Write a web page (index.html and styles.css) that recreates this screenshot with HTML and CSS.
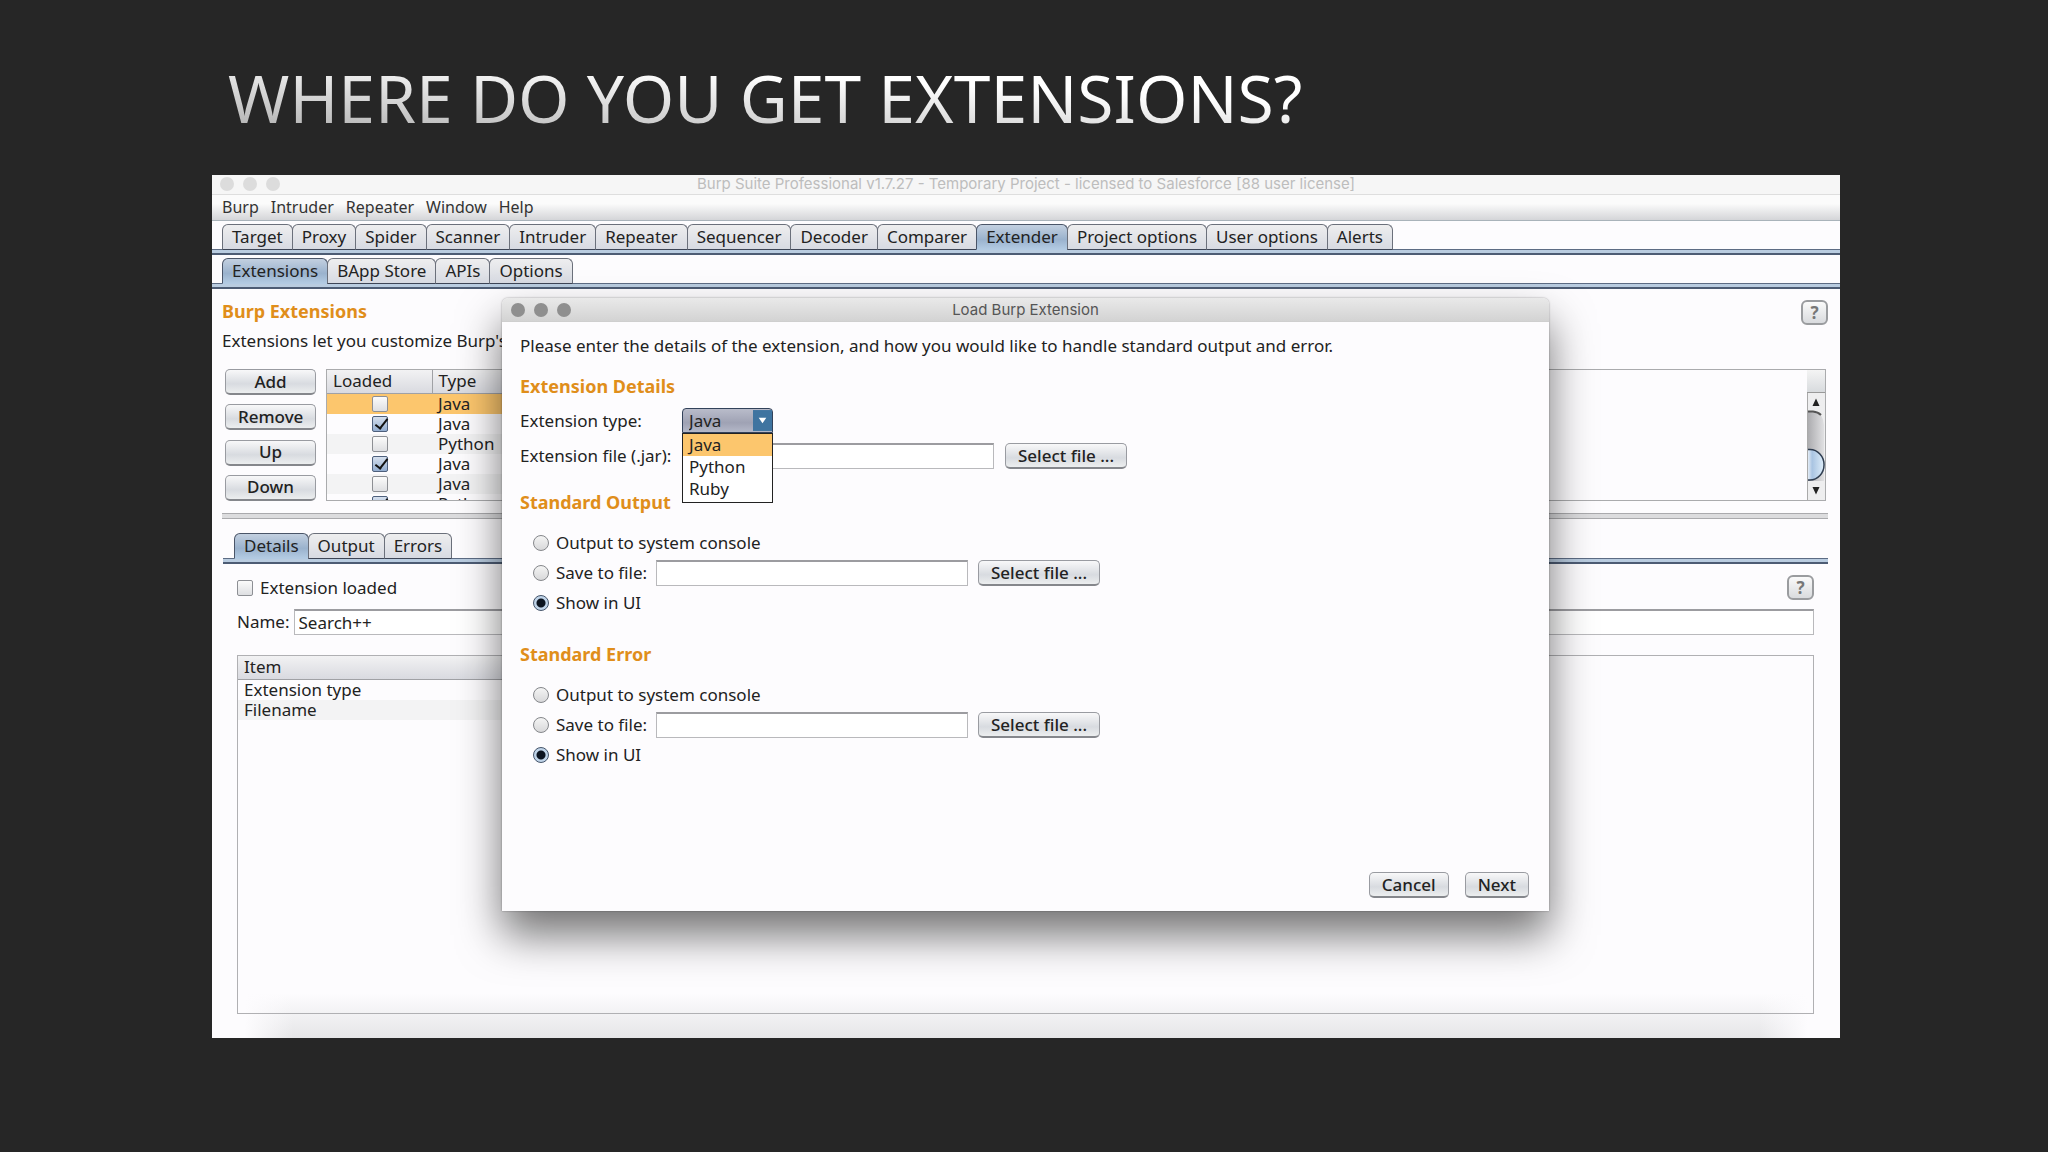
FILE: index.html
```html
<!DOCTYPE html>
<html lang="en">
<head>
    <meta charset="UTF-8">
    <meta name="viewport" content="width=device-width, initial-scale=1.0">
    <title>Where do you get extensions?</title>

    <link rel="stylesheet" href="styles.css">
</head>
<body>

<div class="slide">
    <h1 class="slide-title">WHERE DO YOU GET EXTENSIONS?</h1>

    <!-- Main window -->
    <div class="window">
        <div class="title-bar">
            <div class="lights"><span></span><span></span><span></span></div>
            <div class="title-text">Burp Suite Professional v1.7.27 - Temporary Project - licensed to Salesforce [88 user license]</div>
        </div>

        <nav class="menu-bar">
            <a href="#">Burp</a>
            <a href="#">Intruder</a>
            <a href="#">Repeater</a>
            <a href="#">Window</a>
            <a href="#">Help</a>
        </nav>

        <div class="tabs">
            <button type="button" class="tab">Target</button>
            <button type="button" class="tab">Proxy</button>
            <button type="button" class="tab">Spider</button>
            <button type="button" class="tab">Scanner</button>
            <button type="button" class="tab">Intruder</button>
            <button type="button" class="tab">Repeater</button>
            <button type="button" class="tab">Sequencer</button>
            <button type="button" class="tab">Decoder</button>
            <button type="button" class="tab">Comparer</button>
            <button type="button" class="tab active">Extender</button>
            <button type="button" class="tab">Project options</button>
            <button type="button" class="tab">User options</button>
            <button type="button" class="tab">Alerts</button>
        </div>

        <div class="tabs">
            <button type="button" class="tab active">Extensions</button>
            <button type="button" class="tab">BApp Store</button>
            <button type="button" class="tab">APIs</button>
            <button type="button" class="tab">Options</button>
        </div>

        <!-- Extensions list -->
        <div class="extensions">
            <div class="section-head">
                <h2 class="heading">Burp Extensions</h2>
                <button type="button" class="help-btn">?</button>
            </div>
            <p class="intro">Extensions let you customize Burp's</p>

            <div class="list-row">
                <div class="side-buttons">
                    <button type="button" class="btn">Add</button>
                    <button type="button" class="btn">Remove</button>
                    <button type="button" class="btn">Up</button>
                    <button type="button" class="btn">Down</button>
                </div>
                <div class="list-pane">
                    <div class="list-scroll">
                        <table class="grid ext-table">
                            <thead>
                                <tr><th class="col-loaded">Loaded</th><th>Type</th></tr>
                            </thead>
                            <tbody>
                                <tr class="selected"><td><input type="checkbox" class="check" aria-label="Loaded"></td><td>Java</td></tr>
                                <tr><td><input type="checkbox" class="check" aria-label="Loaded" checked></td><td>Java</td></tr>
                                <tr><td><input type="checkbox" class="check" aria-label="Loaded"></td><td>Python</td></tr>
                                <tr><td><input type="checkbox" class="check" aria-label="Loaded" checked></td><td>Java</td></tr>
                                <tr><td><input type="checkbox" class="check" aria-label="Loaded"></td><td>Java</td></tr>
                                <tr><td><input type="checkbox" class="check" aria-label="Loaded" checked></td><td>Python</td></tr>
                            </tbody>
                        </table>
                    </div>
                    <div class="scrollbar">
                        <div class="scroll-corner"></div>
                        <svg class="scroll-art" viewBox="0 0 18 107" width="18" height="107">
                            <defs>
                                <linearGradient id="track"><stop offset="0" stop-color="#a9a9ac"/><stop offset="1" stop-color="#e0e0e2"/></linearGradient>
                                <linearGradient id="thumb"><stop offset="0" stop-color="#f2f6fb"/><stop offset=".3" stop-color="#a9c4e2"/><stop offset="1" stop-color="#dfeefa"/></linearGradient>
                            </defs>
                            <rect width="18" height="107" fill="#eeeeef"/>
                            <path d="M0 18H6Q16 20 17 32V88H0Z" fill="url(#track)"/>
                            <path d="M0 18.500H6Q11 19 14 22" fill="none" stroke="#555" stroke-width="2"/>
                            <path d="M0 56.500H3A14 15.200 0 0 1 3 87H0Z" fill="url(#thumb)"/>
                            <path d="M0 56.500H3A14 15.200 0 0 1 3 87H0" fill="none" stroke="#2f3d50" stroke-width="1.500"/>
                            <path d="M.5 0V107" stroke="#aaa"/>
                            <path d="M9 5.500L12.500 13H5.500Z M9 101.500L12.500 94H5.500Z" fill="#222"/>
                        </svg>
                    </div>
                </div>
            </div>
            <div class="splitter"></div>
        </div>

        <!-- Details of the selected extension -->
        <div class="details">
            <div class="tabs inner-tabs">
                <button type="button" class="tab active">Details</button>
                <button type="button" class="tab">Output</button>
                <button type="button" class="tab">Errors</button>
            </div>
            <div class="details-body">
                <div class="section-head">
                    <label class="option"><input type="checkbox" class="check"> Extension loaded</label>
                    <button type="button" class="help-btn">?</button>
                </div>
                <div class="name-row">
                    <label for="name">Name:</label>
                    <input type="text" id="name" class="field" value="Search++">
                </div>
                <div class="item-pane">
                    <table class="grid item-table">
                        <thead>
                            <tr><th>Item</th></tr>
                        </thead>
                        <tbody>
                            <tr><td>Extension type</td></tr>
                            <tr class="alt"><td>Filename</td></tr>
                        </tbody>
                    </table>
                </div>
            </div>
        </div>

        <!-- Load extension dialog -->
        <form class="dialog">
            <div class="dialog-bar">
                <div class="lights"><span></span><span></span><span></span></div>
                <div class="title-text">Load Burp Extension</div>
            </div>
            <div class="dialog-body">
                <p class="dialog-intro">Please enter the details of the extension, and how you would like to handle standard output and error.</p>

                <h2 class="heading">Extension Details</h2>
                <div class="form-row type-row">
                    <label class="form-label" for="type">Extension type:</label>
                    <div class="combo">
                        <select id="type" class="combo-select">
                            <option>Java</option>
                        </select>
                        <svg class="combo-arrow" viewBox="0 0 20 22"><rect width="20" height="22" fill="#3f74a0"/><path d="M6 8H14L10 14Z" fill="#fff"/></svg>
                        <ul class="combo-list">
                            <li class="selected">Java</li>
                            <li>Python</li>
                            <li>Ruby</li>
                        </ul>
                    </div>
                </div>
                <div class="form-row">
                    <label class="form-label" for="file">Extension file (.jar):</label>
                    <input type="text" id="file" class="field file-field">
                    <button type="button" class="btn">Select file ...</button>
                </div>

                <h2 class="heading">Standard Output</h2>
                <div class="options">
                    <label class="option"><input type="radio" name="out" class="radio"> Output to system console</label>
                    <div class="form-row">
                        <label class="option save-label"><input type="radio" name="out" class="radio"> Save to file:</label>
                        <input type="text" class="field save-field" aria-label="Output file">
                        <button type="button" class="btn">Select file ...</button>
                    </div>
                    <label class="option"><input type="radio" name="out" class="radio" checked> Show in UI</label>
                </div>

                <h2 class="heading">Standard Error</h2>
                <div class="options">
                    <label class="option"><input type="radio" name="err" class="radio"> Output to system console</label>
                    <div class="form-row">
                        <label class="option save-label"><input type="radio" name="err" class="radio"> Save to file:</label>
                        <input type="text" class="field save-field" aria-label="Error file">
                        <button type="button" class="btn">Select file ...</button>
                    </div>
                    <label class="option"><input type="radio" name="err" class="radio" checked> Show in UI</label>
                </div>

                <div class="dialog-actions">
                    <button type="button" class="btn">Cancel</button>
                    <button type="button" class="btn">Next</button>
                </div>
            </div>
        </form>
    </div>
</div>

</body>
</html>
```

FILE: styles.css
```css
* {
    box-sizing: border-box;
}

body {
    margin: 0;
    min-height: 100vh;
    background-color: #262626;
    font-family: "Noto Sans", sans-serif;
    font-size: 17px;
    line-height: 20px;
    color: #222;
}

button, input, select {
    font: inherit;
    color: inherit;
    margin: 0;
}

h1, h2, p, ul {
    margin: 0;
    padding: 0;
}

.slide {
    padding: 52px 208px 0 212px;
}

.slide-title {
    width: fit-content;
    margin-left: 16px;
    font-size: 66px;
    font-weight: 400;
    line-height: 90px;
    color: transparent;
    background: linear-gradient(183deg, #fff 35%, #b4b4b4 90%);
    background-clip: text;
    -webkit-background-clip: text;
}

/* Main window */
.window {
    position: relative;
    margin-top: 33px;
    padding-bottom: 24px;
    background: linear-gradient(90deg, #fdfcfe 2%, transparent 5%, transparent 95%, #fdfcfe 98%),
        linear-gradient(#fdfcfe, #e6e6e8) 0 100% / 100% 45px no-repeat #fdfcfe;
}

.title-bar, .dialog-bar {
    position: relative;
    display: flex;
    align-items: center;
    justify-content: center;
    height: 20px;
    padding-bottom: 1px;
    font-family: Inter, sans-serif;
    font-size: 15px;
    color: #bdbdbd;
    background: #f6f6f6;
    border-bottom: 1px solid #dedede;
}

.lights {
    position: absolute;
    left: 8px;
    display: flex;
    gap: 9px;
}

.lights span {
    width: 14px;
    height: 14px;
    border-radius: 50%;
    background: #dcdcdc;
}

.menu-bar {
    display: flex;
    gap: 12px;
    height: 26px;
    padding: 2px 10px;
    font-size: 16px;
    background: linear-gradient(#fbfbfb 35%, #d4d5d8);
    border-bottom: 1px solid #a9b3ba;
}

.menu-bar a {
    color: #333;
    text-decoration: none;
}

/* Tabs sit on a double blue line */
.tabs {
    display: flex;
    padding: 3px 10px 5px;
    background: linear-gradient(#4d5c74, #4d5c74) 0 100% / 100% 2px no-repeat,
        linear-gradient(#b9cce0, #b9cce0) 0 100% / 100% 5px no-repeat,
        linear-gradient(#5d6c84, #5d6c84) 0 100% / 100% 6px no-repeat;
}

.tab {
    height: 26px;
    padding: 0 9px;
    margin-right: -1px;
    line-height: 24px;
    background: linear-gradient(#eeeeef, #d7dae2);
    border: 1px solid #6b707b;
    border-bottom-color: #3d4556;
    border-radius: 6px 6px 0 0;
}

.tab.active {
    background: linear-gradient(#c3d0e0, #9ab2cd 60%, #b2cae2);
    border-color: #4a5568;
    border-bottom-color: #b2cae2;
}

.heading {
    font-size: 18px;
    font-weight: 700;
    line-height: 22px;
    color: #e08e1b;
}

.section-head {
    display: flex;
    justify-content: space-between;
}

.help-btn {
    width: 27px;
    height: 25px;
    padding: 0;
    font-weight: 700;
    line-height: 20px;
    color: #777;
    background: linear-gradient(#fafafa, #d9dbde);
    border: 2px solid #9a9c9f;
    border-radius: 6px;
}

.btn {
    height: 26px;
    padding: 0 12px;
    font-weight: 500;
    line-height: 22px;
    background: linear-gradient(#f8f8f9, #d8dbe0 60%, #eceeef);
    border: 1px solid #999ba1;
    border-bottom: 2px solid #85878c;
    border-radius: 5px;
}

.field {
    height: 26px;
    padding: 0 4px;
    background: #fff;
    border: 1px solid #b9b9bc;
    border-top: 2px solid #9c9ca0;
}

.extensions {
    padding: 11px 12px 0 10px;
}

.intro {
    padding-top: 6px;
}

.list-row {
    display: flex;
    gap: 10px;
    padding: 18px 2px 12px 3px;
}

.side-buttons {
    display: flex;
    flex-direction: column;
    justify-content: space-between;
    width: 91px;
}

.list-pane {
    display: flex;
    flex: 1;
    height: 132px;
    border: 1px solid #aaabad;
}

.list-scroll {
    flex: 1;
    overflow: hidden;
}

.scrollbar {
    width: 18px;
}

.scroll-corner {
    height: 23px;
    background: linear-gradient(#f4f4f4, #d8dbde);
    border-bottom: 1px solid #999;
}

.scroll-art {
    display: block;
}

.grid {
    border-collapse: collapse;
    table-layout: fixed;
}

.grid th {
    height: 23px;
    padding: 0 6px;
    font-weight: 400;
    line-height: 20px;
    text-align: left;
    background: linear-gradient(#f2f2f3, #d9dae0);
    border-bottom: 1px solid #a0a1a5;
}

.grid td {
    height: 20px;
    padding: 0 6px;
    line-height: 20px;
}

.ext-table {
    width: 40%;
}

.ext-table .col-loaded {
    width: 105px;
    border-right: 1px solid #a0a1a5;
}

.ext-table td:first-child {
    text-align: center;
}

.ext-table tr:nth-child(odd) td, .item-table .alt td {
    background: #f3f3f4;
}

.ext-table tr.selected td {
    background: #fcc66d;
}

.check {
    appearance: none;
    display: inline-block;
    width: 16px;
    height: 16px;
    vertical-align: middle;
    background: linear-gradient(#fbfbfb, #dedfe2);
    border: 1px solid #8d8f94;
    border-radius: 2px;
}

.grid .check {
    display: block;
    margin: 0 auto;
}

.check:checked {
    background: linear-gradient(#d6e0ee, #93add0);
    border-color: #4d5f7c;
}

.check:checked::after {
    content: "";
    display: block;
    width: 5px;
    height: 11px;
    margin: -1px 0 0 5px;
    border: solid #111;
    border-width: 0 2px 2px 0;
    transform: rotate(38deg);
}

.splitter {
    height: 6px;
    background: #dcdcde;
    border-top: 1px solid #aaaaad;
    border-bottom: 1px solid #aaaaad;
}

/* Details */
.details {
    padding: 11px 12px 0 11px;
}

.inner-tabs {
    padding-left: 11px;
}

.details-body {
    padding: 11px 14px 0 14px;
}

.option {
    display: flex;
    align-items: center;
    gap: 7px;
    white-space: nowrap;
}

.name-row {
    display: flex;
    align-items: center;
    gap: 4px;
    margin-top: 9px;
}

.name-row .field {
    flex: 1;
}

.item-pane {
    min-height: 359px;
    margin-top: 20px;
    border: 1px solid #b0b0b3;
}

.item-table {
    width: 40%;
}

/* Dialog */
.dialog {
    position: absolute;
    top: 123px;
    left: 290px;
    right: 291px;
    background: #fdfcfe;
    border-radius: 6px 6px 0 0;
    box-shadow: 0 24px 44px rgba(0, 0, 0, 0.55), 0 0 2px rgba(0, 0, 0, 0.4);
}

.dialog-bar {
    height: 24px;
    padding: 0;
    color: #555;
    background: linear-gradient(#e9e9e9, #d3d3d3);
    border-bottom-color: #cfcfcf;
    border-radius: 6px 6px 0 0;
}

.dialog-bar .lights {
    left: 9px;
}

.dialog-bar .lights span {
    background: #8f8f8f;
}

.dialog-body {
    padding: 14px 20px 13px 18px;
}

.dialog-intro {
    padding-bottom: 19px;
}

.form-row {
    display: flex;
    align-items: center;
    gap: 10px;
}

.dialog-body > .form-row {
    gap: 0;
    padding-bottom: 22px;
}

.dialog-body > .type-row {
    padding: 11px 0 10px;
}

.form-label {
    width: 162px;
}

.combo {
    position: relative;
    width: 91px;
    height: 25px;
}

.combo-select {
    appearance: none;
    width: 100%;
    height: 25px;
    padding: 0 6px;
    line-height: 22px;
    background: linear-gradient(#b9bcca, #9fa2b4 60%, #b4b8c8);
    border: 1px solid #33425a;
    border-radius: 4px 4px 0 0;
}

.combo-arrow {
    position: absolute;
    top: 1px;
    right: 1px;
    width: 19px;
    height: 23px;
}

.combo-list {
    position: absolute;
    top: 25px;
    left: 0;
    width: 100%;
    padding-bottom: 2px;
    list-style: none;
    background: #fff;
    border: 1px solid #222;
}

.combo-list li {
    padding: 1px 6px;
    height: 22px;
}

.combo-list .selected {
    background: #fcc66d;
}

.file-field {
    width: 312px;
    margin-right: 11px;
}

.options {
    display: flex;
    flex-direction: column;
    gap: 7px;
    padding: 20px 0 30px 13px;
}

.options .option {
    height: 20px;
}

.save-label {
    width: 113px;
}

.save-field {
    width: 312px;
}

.radio {
    appearance: none;
    flex-shrink: 0;
    width: 16px;
    height: 16px;
    background: linear-gradient(#f4f4f4, #d8d8da);
    border: 1px solid #85878b;
    border-radius: 50%;
}

.radio:checked {
    background: radial-gradient(circle, #0c1420 0 4px, #bfd3e8 5px);
    border-color: #44546a;
}

.dialog-actions {
    display: flex;
    justify-content: flex-end;
    gap: 16px;
    margin-top: 77px;
}
```
